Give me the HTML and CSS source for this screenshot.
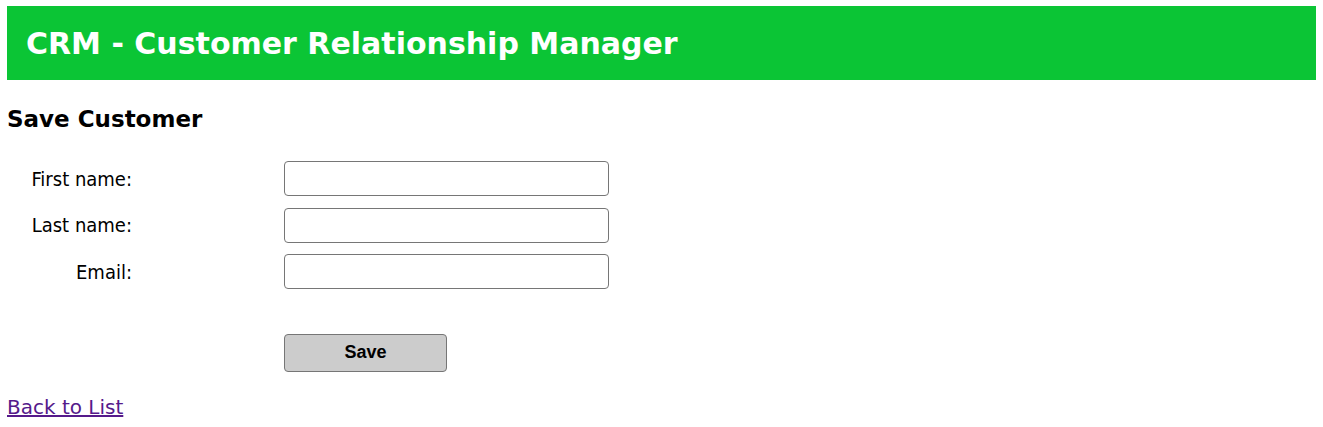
FILE: index.html
```html
<!DOCTYPE html>
<html>
<head>
<meta charset="utf-8">
<title>Save Customer</title>
<link rel="stylesheet" href="styles.css">
</head>
<body>
<div class="wrapper">
  <div class="header">
    <h2 class="title">CRM - Customer Relationship Manager</h2>
  </div>
</div>
<div class="container">
  <h3 class="subtitle">Save Customer</h3>
  <form class="form">
    <label class="label">First name:</label>
    <input class="field" type="text">
    <label class="label">Last name:</label>
    <input class="field" type="text">
    <label class="label">Email:</label>
    <input class="field" type="text">
    <span class="label"></span>
    <button class="save" type="button">Save</button>
  </form>
  <a class="back" href="#">Back to List</a>
</div>
</body>
</html>
```

FILE: styles.css
```css
html, body {
  margin: 0;
  padding: 0;
  background: #ffffff;
}
body {
  padding: 6px 7px 0 7px;
  font-family: "DejaVu Sans", Verdana, sans-serif;
}
.header {
  background: #0bc535;
  height: 74px;
  display: flex;
  align-items: center;
  padding-left: 19px;
}
.title {
  margin: 0;
  color: #ffffff;
  font-size: 30px;
  font-weight: bold;
}
.subtitle {
  margin: 26px 0 0 0;
  font-size: 23px;
  font-weight: bold;
  color: #000;
}
.form {
  display: grid;
  grid-template-columns: 125px 325px;
  column-gap: 152px;
  row-gap: 11.5px;
  margin-top: 29px;
  align-items: center;
}
.label {
  text-align: right;
  font-family: "DejaVu Sans Condensed", "DejaVu Sans", sans-serif;
  font-size: 20px;
  color: #000;
}
.field {
  box-sizing: border-box;
  width: 325px;
  height: 35px;
  border: 1px solid #767676;
  border-radius: 4px;
  background: #fff;
  margin: 0;
}
.save {
  grid-column: 2;
  margin-top: 33px;
  box-sizing: border-box;
  width: 163px;
  height: 38px;
  background: #cccccc;
  border: 1px solid #767676;
  border-radius: 4px;
  font-family: "Liberation Sans", Arial, sans-serif;
  font-weight: bold;
  font-size: 18px;
  color: #000;
}
.back {
  display: inline-block;
  margin-top: 23px;
  font-size: 20px;
  color: #551a8b;
}
```
